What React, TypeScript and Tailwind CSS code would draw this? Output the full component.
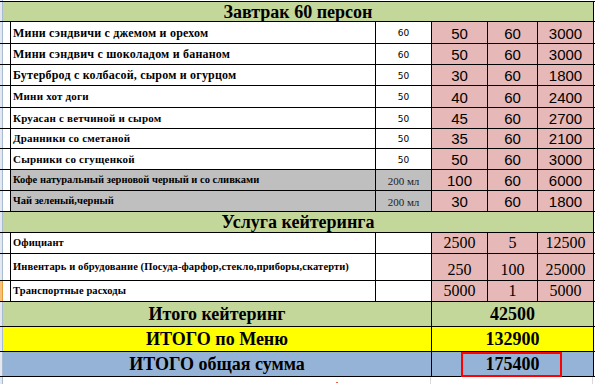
import React from 'react';

const serif = { fontFamily: '"Liberation Serif", "Times New Roman", serif' };

interface Item {
  name: string;
  qty: string;
  price: string;
  count: string;
  sum: string;
  h: string;
  fs: string;
  gray?: boolean;
  selected?: boolean;
}

const menu: Item[] = [
  { name: 'Мини сэндвичи с джемом и орехом', qty: '60', price: '50', count: '60', sum: '3000', h: 'h-[22px]', fs: 'text-[12px] tracking-[0.2px]' },
  { name: 'Мини сэндвич с шоколадом и бананом', qty: '60', price: '50', count: '60', sum: '3000', h: 'h-[21px]', fs: 'text-[12px] tracking-[0.2px]' },
  { name: 'Бутерброд с колбасой, сыром и огурцом', qty: '50', price: '30', count: '60', sum: '1800', h: 'h-[21px]', fs: 'text-[12px] tracking-[0.2px]' },
  { name: 'Мини хот доги', qty: '50', price: '40', count: '60', sum: '2400', h: 'h-[22px]', fs: 'text-[11px] tracking-[0.2px]' },
  { name: 'Круасан с ветчиной и сыром', qty: '50', price: '45', count: '60', sum: '2700', h: 'h-[21px]', fs: 'text-[11px] tracking-[0.2px]' },
  { name: 'Дранники со сметаной', qty: '50', price: '35', count: '60', sum: '2100', h: 'h-[20px]', fs: 'text-[11px] tracking-[0.2px]' },
  { name: 'Сырники со сгущенкой', qty: '50', price: '50', count: '60', sum: '3000', h: 'h-[21px]', fs: 'text-[11px] tracking-[0.2px]' },
  { name: 'Кофе натуральный зерновой черный и со сливками', qty: '200 мл', price: '100', count: '60', sum: '6000', h: 'h-[21px]', fs: 'text-[10.5px]', gray: true },
  { name: 'Чай зеленый,черный', qty: '200 мл', price: '30', count: '60', sum: '1800', h: 'h-[21px]', fs: 'text-[10.5px]', gray: true },
];

const catering: Item[] = [
  { name: 'Официант', qty: '', price: '2500', count: '5', sum: '12500', h: 'h-[21px]', fs: 'text-[10.5px] tracking-[0.1px]' },
  { name: 'Инвентарь и обрудование (Посуда-фарфор,стекло,приборы,скатерти)', qty: '', price: '250', count: '100', sum: '25000', h: 'h-[27px]', fs: 'text-[10.5px] tracking-[0.1px]' },
  { name: 'Транспортные расходы', qty: '', price: '5000', count: '1', sum: '5000', h: 'h-[21px]', fs: 'text-[10.5px] tracking-[0.1px]', selected: true },
];

function Strip({ selected }: { selected?: boolean }) {
  return (
    <div
      className={
        selected
          ? 'w-[3px] shrink-0 bg-[#f6c27a] border-r border-[#e59b3c]'
          : 'w-[3px] shrink-0 bg-[#e4e9f1] border-r border-[#a9bbd1]'
      }
    />
  );
}

function Section({ title, h }: { title: string; h: string }) {
  return (
    <div className={`flex ${h} border-b border-black`}>
      <Strip />
      <div
        className="w-[591px] bg-[#c4d79b] border-r border-black flex items-center justify-center text-[18px] font-bold text-black leading-none"
        style={serif}
      >
        {title}
      </div>
      <div className="flex-1 bg-white" />
    </div>
  );
}

function Row({ item, serifNums }: { item: Item; serifNums?: boolean }) {
  const numFont = serifNums
    ? { fontFamily: '"Liberation Serif", serif', fontSize: '16px' }
    : { fontFamily: '"Liberation Sans", Arial, sans-serif', fontSize: '15px' };
  const bg = item.gray ? 'bg-[#bfbfbf]' : 'bg-white';
  return (
    <div className={`flex border-b border-black ${item.h}`}>
      <Strip selected={item.selected} />
      <div className="w-[8px] bg-white border-r border-black" />
      <div
        className={`w-[365px] ${bg} border-r border-black flex items-center pl-[2px] ${item.fs} font-bold text-black whitespace-nowrap leading-none`}
        style={serif}
      >
        {item.name}
      </div>
      <div className={`w-[56px] ${bg} border-r border-black flex items-center justify-center pt-[2px] leading-none text-black`}>
        {item.qty.includes('мл') ? (
          <span className="text-[11px] text-[#222]" style={serif}>{item.qty}</span>
        ) : (
          <span className="text-[9px]" style={{ fontFamily: '"DejaVu Sans", Verdana, sans-serif' }}>{item.qty}</span>
        )}
      </div>
      {[item.price, item.count, item.sum].map((v, i) => (
        <div
          key={i}
          className={`${i === 1 ? 'w-[50px]' : 'w-[56px]'} bg-[#e6b8b7] border-r border-black flex items-end justify-center pb-[2px] leading-none text-black`}
          style={numFont}
        >
          {v}
        </div>
      ))}
      <div className="flex-1 bg-white" />
    </div>
  );
}

function Total({ label, value, bg, mark }: { label: string; value: string; bg: string; mark?: boolean }) {
  return (
    <div className="flex h-[25px] border-b border-black">
      <Strip />
      <div
        className={`w-[429px] ${bg} border-r border-black flex items-center justify-center text-[18px] font-bold text-black leading-none`}
        style={serif}
      >
        {label}
      </div>
      <div
        className={`relative w-[162px] ${bg} border-r border-black flex items-center justify-center text-[18px] font-bold text-black leading-none`}
        style={serif}
      >
        {value}
        {mark && <div className="absolute left-[29px] top-0 -bottom-[1px] w-[101px] border-2 border-[#ff0000]" />}
      </div>
      <div className="flex-1 bg-white" />
    </div>
  );
}

export default function App() {
  return (
    <div className="relative w-[595px] h-[384px] overflow-hidden bg-white">
      <div className="flex h-[1px]">
        <Strip />
        <div className="flex-1 bg-white" />
      </div>
      <div className="border-t border-black">
        <Section title="Завтрак 60 персон" h="h-[20px]" />
        {menu.map((m) => (
          <Row key={m.name} item={m} />
        ))}
        <Section title="Услуга кейтеринга" h="h-[21px]" />
        {catering.map((m) => (
          <Row key={m.name} item={m} serifNums />
        ))}
        <Total label="Итого кейтеринг" value="42500" bg="bg-[#c4d79b]" />
        <Total label="ИТОГО по Меню" value="132900" bg="bg-[#ffff00]" />
        <Total label="ИТОГО общая сумма" value="175400" bg="bg-[#95b3d7]" mark />
      </div>
      <div className="flex h-[8px]">
        <Strip />
        <div className="w-[428px] border-r border-[#d9d9d9]" />
        <div className="w-[162px] border-r border-[#d9d9d9]" />
        <div className="flex-1" />
      </div>
      <span className="absolute left-[336px] top-[382px] w-[2px] h-[1px] bg-[#f0603a]" />
    </div>
  );
}
